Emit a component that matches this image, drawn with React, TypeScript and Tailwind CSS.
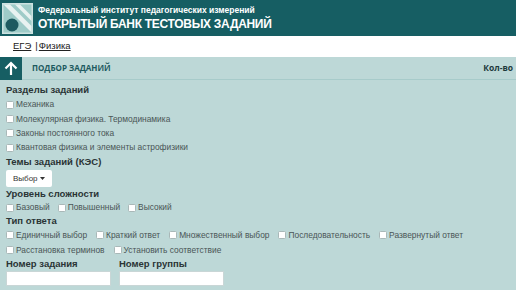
import React from 'react'

const font = { fontFamily: '"Liberation Sans", Arial, sans-serif' }

function Box() {
  return <span className="inline-block w-[8px] h-[8px] bg-white border border-[#a9b8b8] rounded-[1.5px] mr-[2px]" />
}

function Check({ label }: { label: string }) {
  return (
    <span className="inline-flex items-center whitespace-nowrap">
      <Box />
      {label}
    </span>
  )
}

function Row({ children, className = '' }: { children: React.ReactNode; className?: string }) {
  return <div className={`h-[14.4px] flex items-center ${className}`}>{children}</div>
}

function Heading({ children, className = 'h-[14.4px]' }: { children: React.ReactNode; className?: string }) {
  return <div className={`flex items-center font-bold text-[9.5px] text-[#2a3435] ${className}`}>{children}</div>
}

function Logo() {
  return (
    <svg width="31" height="31" viewBox="0 0 31 31" className="shrink-0">
      <rect x="0" y="0" width="31" height="31" fill="#cde2e1" />
      <rect x="1.5" y="1.5" width="28" height="28" fill="#9ecbc8" />
      <path d="M1.5 1.5 L8 1.5 L29.5 23 L29.5 29.5 Z" fill="#e8f2f1" />
      <path d="M13 1.5 L18 1.5 L29.5 13 L29.5 18 Z" fill="#e8f2f1" />
      <circle cx="10" cy="22" r="6.5" fill="#1d5a60" />
    </svg>
  )
}

export default function App() {
  return (
    <div className="w-[516px] h-[290px] overflow-hidden bg-[#bdd8d7]" style={font}>
      {/* header */}
      <div className="h-[36px] bg-[#165e63] flex items-center pl-[2px]">
        <Logo />
        <div className="ml-[5px] text-white leading-none">
          <div className="text-[8.5px] font-bold">Федеральный институт педагогических измерений</div>
          <div className="text-[12px] font-bold mt-[3px] tracking-[-0.3px]">ОТКРЫТЫЙ БАНК ТЕСТОВЫХ ЗАДАНИЙ</div>
        </div>
      </div>

      {/* breadcrumb */}
      <div className="h-[21px] bg-white flex items-center pl-[13px] text-[9.5px] text-[#222]">
        <span className="underline">ЕГЭ</span>
        <span className="ml-[4px] mr-[1px]">|</span>
        <span className="underline">Физика</span>
      </div>

      {/* panel header */}
      <div className="h-[23px] flex items-center border-b border-[#a7cbca]" style={{ fontFamily: '"Open Sans", sans-serif' }}>
        <div className="w-[22px] h-[23px] bg-[#165e63] flex items-center justify-center">
          <svg width="14" height="15" viewBox="0 0 14 15" fill="none" stroke="white" strokeWidth="2.2">
            <path d="M7 14 V2" />
            <path d="M1.5 7.5 L7 2 L12.5 7.5" />
          </svg>
        </div>
        <div className="ml-[10px] text-[8px] font-bold text-[#1d5a60]">ПОДБОР ЗАДАНИЙ</div>
        <div className="ml-auto mr-[3px] text-[8.5px] font-bold text-[#1d3a3c]">Кол-во</div>
      </div>

      {/* body */}
      <div className="pl-[6px] pt-[3px] text-[8.4px] text-[#4a5556]">
        <Heading>Разделы заданий</Heading>
        <Row><Check label="Механика" /></Row>
        <Row><Check label="Молекулярная физика. Термодинамика" /></Row>
        <Row><Check label="Законы постоянного тока" /></Row>
        <Row><Check label="Квантовая физика и элементы астрофизики" /></Row>
        <Heading>Темы заданий (КЭС)</Heading>
        <div className="mt-[1px] flex">
          <div className="inline-flex items-center h-[17px] px-[7px] bg-white rounded-[2px] text-[8px] text-[#333]">
            Выбор
            <svg width="5" height="3" viewBox="0 0 5 3" className="ml-[2px]"><path d="M0 0 H5 L2.5 3 Z" fill="#333" /></svg>
          </div>
        </div>
        <Heading className="h-[13px]">Уровень сложности</Heading>
        <Row className="gap-[8px]">
          <Check label="Базовый" />
          <Check label="Повышенный" />
          <Check label="Высокий" />
        </Row>
        <Heading className="h-[13.5px]">Тип ответа</Heading>
        <Row className="gap-[9px]">
          <Check label="Единичный выбор" />
          <Check label="Краткий ответ" />
          <Check label="Множественный выбор" />
          <Check label="Последовательность" />
          <Check label="Развернутый ответ" />
        </Row>
        <Row className="gap-[9px]">
          <Check label="Расстановка терминов" />
          <Check label="Установить соответствие" />
        </Row>
        <div className="flex gap-[8px]">
          <div>
            <Heading>Номер задания</Heading>
            <div className="w-[105px] h-[15px] bg-white border border-[#c9d6d6]" />
          </div>
          <div>
            <Heading>Номер группы</Heading>
            <div className="w-[105px] h-[15px] bg-white border border-[#c9d6d6]" />
          </div>
        </div>
      </div>
    </div>
  )
}
